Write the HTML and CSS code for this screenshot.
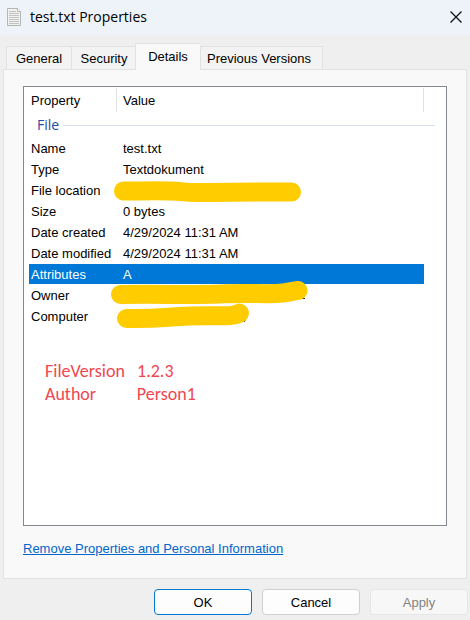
FILE: index.html
```
<!DOCTYPE html>
<html lang="en">
<head>
  <meta charset="UTF-8" />
  <meta name="viewport" content="width=device-width, initial-scale=1.0"/>
  <title>test.txt Properties</title>
  <link rel="stylesheet" href="styles.css">
</head>
<body>

  <!-- Title bar -->
  <header class="titlebar">
    <svg class="file-icon" width="14" height="18" viewBox="0 0 14 18" aria-hidden="true">
      <path d="M.5 .5H10.500L13.500 3.500V17.500H.5Z" fill="#f1f1ef" stroke="#b4b6b6"/>
      <path d="M10.500 .5V3.500H13.500" fill="#fff" stroke="#b4b6b6"/>
      <path d="M2 3.500H9M2 5.500H12M2 7.500H12M2 9.500H12M2 11.500H12M2 13.500H12M2 15.500H12" stroke="#c2c4c3"/>
    </svg>
    <h1>test.txt Properties</h1>
    <button type="button" class="close" aria-label="Close">
      <svg width="12" height="12" viewBox="0 0 12 12">
        <path d="M.5 .5L11.500 11.500M11.500 .5L.5 11.500" stroke="#111" stroke-width="1.300"/>
      </svg>
    </button>
  </header>

  <!-- Tabs -->
  <div class="tabs" role="tablist">
    <button type="button" role="tab" class="tab tab-narrow">General</button>
    <button type="button" role="tab" class="tab tab-narrow">Security</button>
    <button type="button" role="tab" class="tab tab-narrow active" aria-selected="true">Details</button>
    <button type="button" role="tab" class="tab tab-wide">Previous Versions</button>
  </div>

  <!-- Details page -->
  <main class="panel">
    <div class="list">
      <table>
        <colgroup>
          <col class="col-name">
          <col>
          <col class="col-end">
        </colgroup>
        <thead>
          <tr><th>Property</th><th>Value</th><td></td></tr>
        </thead>
        <tbody>
          <tr class="group"><th colspan="3"><div>File</div></th></tr>
          <tr><td>Name</td><td>test.txt</td></tr>
          <tr><td>Type</td><td>Textdokument</td></tr>
          <tr><td>File location</td><td></td></tr>
          <tr><td>Size</td><td>0 bytes</td></tr>
          <tr><td>Date created</td><td>4/29/2024 11:31 AM</td></tr>
          <tr><td>Date modified</td><td>4/29/2024 11:31 AM</td></tr>
          <tr class="selected"><td>Attributes</td><td>A</td></tr>
          <tr><td>Owner</td><td></td></tr>
          <tr><td>Computer</td><td></td></tr>
        </tbody>
      </table>

      <!-- Marker strokes over the private values -->
      <svg class="marker" width="210" height="160" viewBox="0 0 210 160" aria-hidden="true">
        <path class="rest" d="M190 128.500H195M167 131.500H169M137 147L134 152"/>
        <path d="M13.500 21C30 21 45 20.500 60 21S74 22.500 86 22.500S120 22 181.500 22"/>
        <path d="M10.500 124.500C50 124 85 125 110 124S155 124 166 123.500S182 121 188 120.500"/>
        <path d="M16.500 148.500C50 149 55 147 80 146S115 146.500 121 145.500S128 144 129.500 143"/>
      </svg>

      <div class="note">
        <span>FileVersion   1.2.3</span>
        <span>Author          Person1</span>
      </div>
    </div>
    <a href="#" class="remove">Remove Properties and Personal Information</a>
  </main>

  <!-- Dialog buttons -->
  <footer class="actions">
    <button type="button" class="primary">OK</button>
    <button type="button">Cancel</button>
    <button type="button" disabled>Apply</button>
  </footer>

</body>
</html>
```
FILE: styles.css
```
* {
  margin: 0;
  padding: 0;
  box-sizing: border-box;
}
body {
  display: flex;
  flex-direction: column;
  min-height: 100vh;
  font-family: "Liberation Sans", Arial, sans-serif;
  font-size: 13px;
  line-height: 18px;
  color: #000;
  background: #efefef;
}
button {
  padding-top: 2px;
  font: inherit;
  color: inherit;
}

/* Title bar */
.titlebar {
  display: flex;
  align-items: center;
  height: 35px;
  padding: 0 8px 2px 7px;
  background: #eef3fa;
}
.titlebar h1 {
  flex: 1;
  margin-left: 9px;
  font-family: "Open Sans", "Noto Sans", sans-serif;
  font-size: 14px;
  font-weight: normal;
}
.close {
  display: flex;
  padding: 0;
  border: none;
  background: none;
}

/* Tabs */
.tabs {
  display: flex;
  align-items: flex-end;
  margin-top: 8px;
  padding-left: 6px;
}
.tab {
  height: 23px;
  border: 1px solid #e2e2e2;
  border-right: none;
  border-bottom: none;
  background: #f3f3f3;
}
.tab-narrow {
  width: 65px;
}
.tab-wide {
  width: 123px;
  padding-left: 6px;
  border-right: 1px solid #e2e2e2;
  text-align: left;
}
.tab.active {
  position: relative;
  height: 27px;
  margin: 0 0 -1px -1px;
  padding-bottom: 2px;
  background: #f9f9f9;
}

/* Details page */
.panel {
  flex: 1;
  display: flex;
  flex-direction: column;
  margin: 0 3px;
  padding: 16px 19px 20px;
  border: 1px solid #e2e2e2;
  background: #f9f9f9;
}
.list {
  position: relative;
  flex: 1;
  padding: 1px 11px 16px 5px;
  border: 1px solid #828790;
  background: #fff;
}
table {
  width: 100%;
  table-layout: fixed;
  border-collapse: separate;
  border-spacing: 0;
}
.col-name {
  width: 88px;
}
.col-end {
  width: 11px;
}
th {
  font-weight: normal;
  text-align: left;
}
thead th {
  height: 24px;
  padding: 2px 0 0 2px;
  border-right: 1px solid #e2e2e2;
}
tbody td {
  height: 21px;
  padding: 2px 0 0 2px;
  border-bottom: 1px solid transparent;
  background-clip: padding-box;
  white-space: nowrap;
}
thead th + th,
tbody td + td {
  padding-left: 6px;
}
.group div {
  display: flex;
  align-items: center;
  gap: 4px;
  height: 26px;
  padding-left: 8px;
  font-family: "Open Sans", "Noto Sans", sans-serif;
  font-size: 14px;
  color: #1f4aa8;
}
.group div::after {
  content: "";
  flex: 1;
  height: 1px;
  background: #d5dfee;
}
.selected td {
  color: #fff;
  background-color: #0078d7;
}

.marker {
  position: absolute;
  top: 83px;
  left: 86px;
  fill: none;
  stroke: #ffcc00;
  stroke-width: 19px;
  stroke-linecap: round;
}
.marker .rest {
  stroke: #222;
  stroke-width: 1px;
  stroke-linecap: butt;
}

.note {
  display: flex;
  flex-direction: column;
  margin: 33px 0 0 16px;
  font-family: Carlito, Lato, sans-serif;
  font-size: 18px;
  line-height: 23px;
  color: #f04650;
  white-space: pre;
}
.remove {
  align-self: flex-start;
  margin-top: 14px;
  color: #0066cc;
}

/* Dialog buttons */
.actions {
  display: flex;
  justify-content: flex-end;
  gap: 10px;
  padding: 10px 2px 5px;
}
.actions button {
  width: 98px;
  height: 26px;
  border: 1px solid #d0d0d0;
  border-radius: 4px;
  background: #fdfdfd;
}
.actions .primary {
  border-color: #0078d4;
}
.actions button:disabled {
  border-color: #e6e6e6;
  color: #838383;
  background: #f7f7f7;
}
```
